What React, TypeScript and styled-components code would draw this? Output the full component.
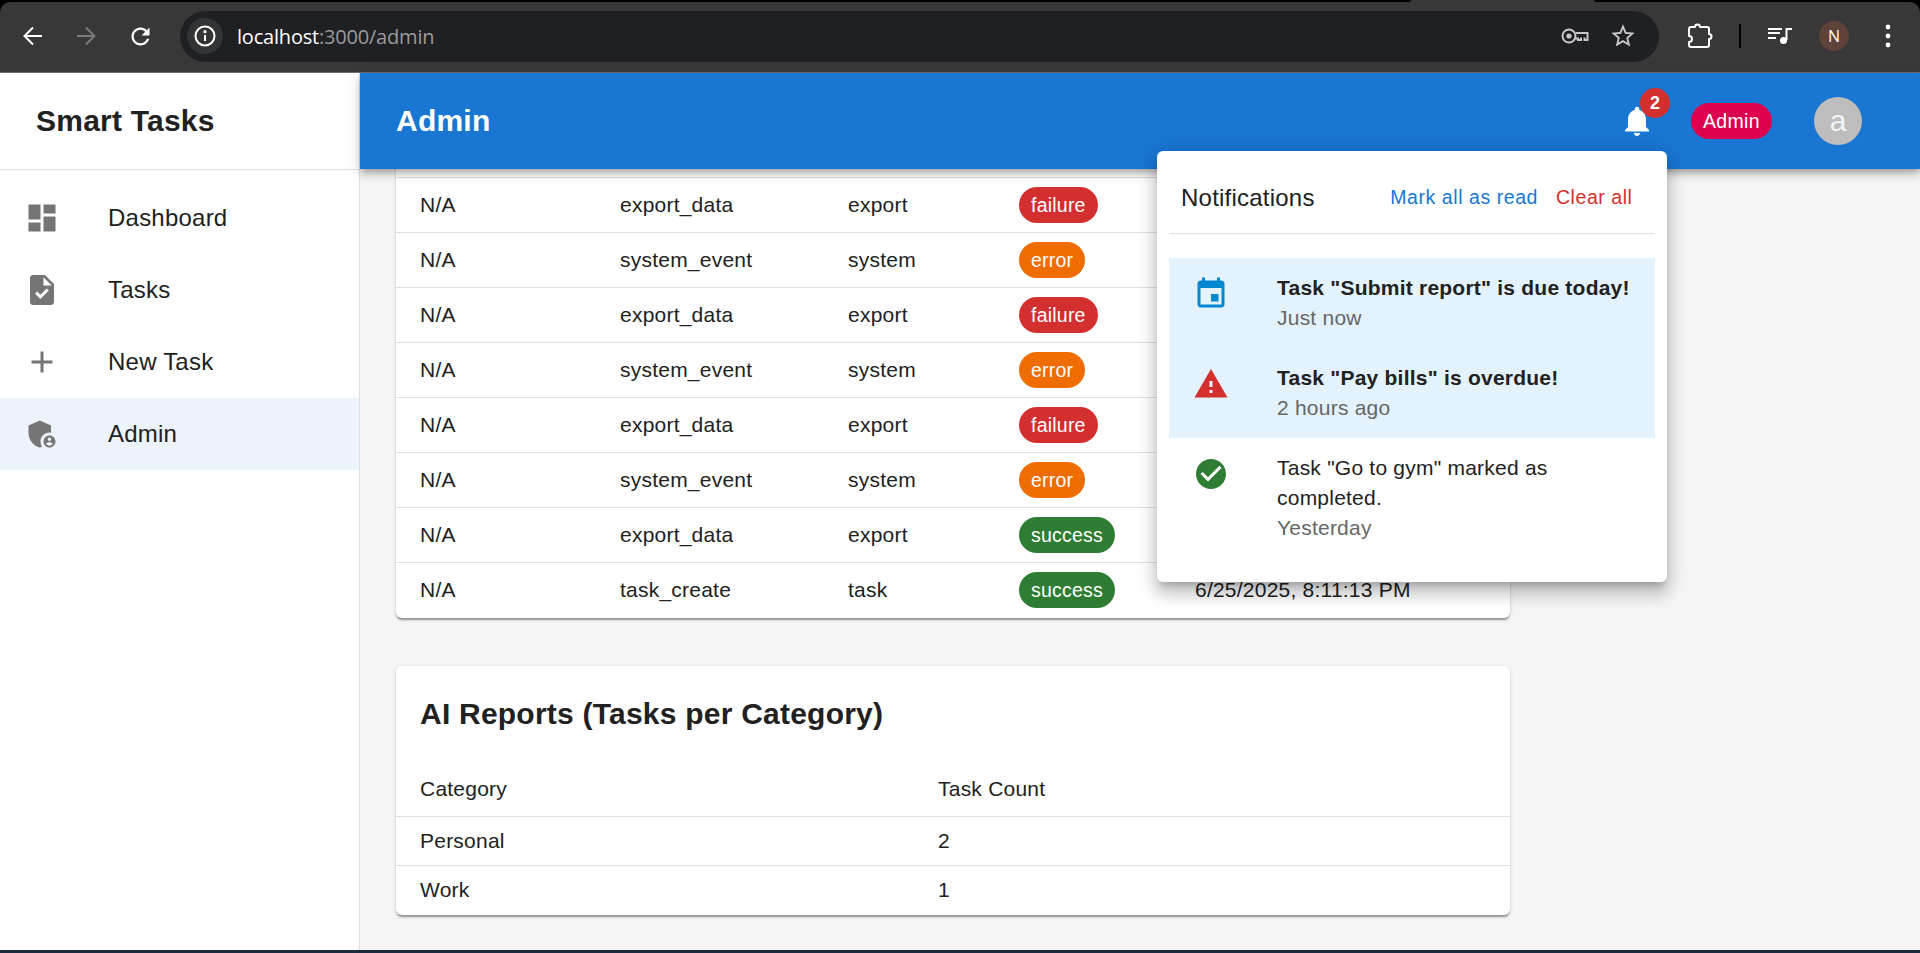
import React from 'react'
import styled, { createGlobalStyle } from 'styled-components'

const GlobalStyle = createGlobalStyle`
  html, body {
    margin: 0;
    padding: 0;
    height: 100%;
    overflow: hidden;
    background: #000;
  }
  #root {
    height: 100%;
  }
  * {
    box-sizing: border-box;
  }
`

const Page = styled.div`
  display: flex;
  flex-direction: column;
  height: 100vh;
  overflow: hidden;
  font-family: 'Liberation Sans', Arial, sans-serif;
  color: #212121;
  background: #f5f5f5;
`

// browser window chrome
const BrowserFrame = styled.div`
  position: relative;
  flex: none;
  height: 73px;
  padding-top: 2px;
  background: #000;
  &::after {
    content: '';
    position: absolute;
    top: 0;
    left: 1410px;
    width: 185px;
    height: 2px;
    background: #383838;
    border-radius: 2px 2px 0 0;
  }
`

const Toolbar = styled.div`
  display: flex;
  align-items: center;
  height: 71px;
  padding: 0 18px 2px 21px;
  background: #383838;
  border-radius: 10px 10px 0 0;
  border-bottom: 1px solid #6e6e6e;
`

const NavButtons = styled.div`
  display: flex;
  align-items: center;
  gap: 29px;
  margin-right: 26px;
  color: #fff;
`

const AddressBar = styled.div`
  flex: 1;
  display: flex;
  align-items: center;
  height: 51px;
  padding: 0 22px 0 7px;
  border-radius: 26px;
  background: #1f2023;
`

const InfoChip = styled.div`
  display: flex;
  align-items: center;
  justify-content: center;
  width: 36px;
  height: 36px;
  border-radius: 50%;
  background: #333436;
  color: #fff;
`

const Url = styled.div`
  margin-left: 14px;
  font-family: 'Open Sans', 'Noto Sans', sans-serif;
  font-size: 20px;
  letter-spacing: -0.2px;
  color: #fff;
  span {
    color: #9b9b9b;
  }
`

const AddressActions = styled.div`
  display: flex;
  align-items: center;
  gap: 20px;
  margin-left: auto;
  color: #c7c7c7;
`

const ToolbarActions = styled.div`
  display: flex;
  align-items: center;
  gap: 25px;
  margin-left: 27px;
  color: #fff;
`

const ToolbarSeparator = styled.div`
  width: 2px;
  height: 24px;
  background: #000;
`

const ProfileBubble = styled.div`
  display: flex;
  align-items: center;
  justify-content: center;
  width: 30px;
  height: 30px;
  border-radius: 50%;
  background: #5f4339;
  color: #fff;
  font-family: 'Open Sans', sans-serif;
  font-size: 16px;
`

// app
const Shell = styled.div`
  flex: 1;
  display: flex;
  min-height: 0;
`

const Sidebar = styled.aside`
  flex: none;
  width: 360px;
  background: #fff;
  border-right: 1px solid #e0e0e0;
`

const Brand = styled.div`
  display: flex;
  align-items: center;
  height: 97px;
  padding-left: 36px;
  font-size: 30px;
  font-weight: 700;
  letter-spacing: 0.225px;
  border-bottom: 1px solid #e0e0e0;
`

const Nav = styled.nav`
  padding-top: 12px;
`

const NavItem = styled.a<{ $active?: boolean }>`
  display: flex;
  align-items: center;
  height: 72px;
  padding-left: 24px;
  font-size: 24px;
  letter-spacing: 0.225px;
  color: #212121;
  background: ${(p) => (p.$active ? '#edf3fb' : 'transparent')};
  svg {
    flex: none;
    margin-right: 48px;
    color: #757575;
  }
`

const Column = styled.div`
  flex: 1;
  min-width: 0;
  display: flex;
  flex-direction: column;
`

const Header = styled.header`
  flex: none;
  position: relative;
  z-index: 2;
  display: flex;
  align-items: center;
  justify-content: space-between;
  height: 96px;
  padding: 0 58px 0 36px;
  background: #1976d2;
  color: #fff;
  box-shadow: 0 3px 6px -1.5px rgba(0, 0, 0, 0.2), 0 6px 7.5px 0 rgba(0, 0, 0, 0.14),
    0 1.5px 15px 0 rgba(0, 0, 0, 0.12);
`

const HeaderTitle = styled.div`
  font-size: 30px;
  font-weight: 700;
  letter-spacing: 0.225px;
`

const HeaderRight = styled.div`
  display: flex;
  align-items: center;
`

const BellWrap = styled.div`
  position: relative;
  display: flex;
  margin-right: 36px;
`

const Badge = styled.span`
  position: absolute;
  top: -15px;
  right: -15px;
  display: flex;
  align-items: center;
  justify-content: center;
  width: 30px;
  height: 30px;
  border-radius: 50%;
  background: #d32f2f;
  font-size: 18px;
  font-weight: 700;
`

const Chip = styled.span<{ $bg: string }>`
  display: inline-flex;
  align-items: center;
  height: 36px;
  padding: 0 12px;
  border-radius: 24px;
  font-size: 19.5px;
  color: #fff;
  background: ${(p) => p.$bg};
`

const RoleChip = styled(Chip)`
  letter-spacing: 0.35px;
`

const Avatar = styled.div`
  display: flex;
  align-items: center;
  justify-content: center;
  width: 48px;
  height: 48px;
  margin-left: 42px;
  border-radius: 50%;
  background: #bdbdbd;
  color: #f5f5f5;
  font-size: 30px;
`

const Main = styled.main`
  flex: 1;
  min-height: 0;
  overflow: hidden;
  display: flex;
  flex-direction: column;
  justify-content: flex-end;
  gap: 48px;
  padding: 0 410px 35px 36px;
`

const Card = styled.section`
  flex: none;
  background: #fff;
  border-radius: 6px;
  box-shadow: 0 3px 1.5px -1.5px rgba(0, 0, 0, 0.2), 0 1.5px 1.5px 0 rgba(0, 0, 0, 0.14),
    0 1.5px 4.5px 0 rgba(0, 0, 0, 0.12);
`

const CardTitle = styled.h2`
  margin: 0;
  padding: 24px;
  font-size: 30px;
  line-height: 48px;
  font-weight: 700;
  letter-spacing: 0.225px;
`

const Table = styled.table`
  width: 100%;
  table-layout: fixed;
  border-collapse: separate;
  border-spacing: 0;
  font-size: 21px;
  letter-spacing: 0.225px;
`

const Cell = styled.td`
  padding: 0 0 0 24px;
  border-bottom: 1px solid #e0e0e0;
  tbody tr:last-child > & {
    padding-bottom: 1px;
    border-bottom: 0;
  }
`

const HeadCell = styled.th`
  padding: 0 0 0 24px;
  font-weight: 400;
  text-align: left;
  border-bottom: 1px solid #e0e0e0;
`

const LogRow = styled.tr`
  height: 55px;
`

const ReportHeadRow = styled.tr`
  height: 55px;
`

const ReportRow = styled.tr`
  height: 49px;
`

// notifications menu
const Popover = styled.div`
  position: absolute;
  top: 78px;
  right: 253px;
  width: 510px;
  padding: 12px;
  border-radius: 6px;
  background: #fff;
  color: #212121;
  box-shadow: 0 7.5px 7.5px -4.5px rgba(0, 0, 0, 0.2), 0 12px 15px 1.5px rgba(0, 0, 0, 0.14),
    0 4.5px 21px 3px rgba(0, 0, 0, 0.12);
`

const PopoverHead = styled.div`
  display: flex;
  align-items: center;
  justify-content: space-between;
  height: 71px;
  padding: 0 15px 1px 12px;
  border-bottom: 1px solid #e0e0e0;
`

const PopoverTitle = styled.div`
  font-size: 24px;
  letter-spacing: 0.225px;
`

const PopoverActions = styled.div`
  display: flex;
  gap: 3px;
`

const TextButton = styled.button<{ $color: string }>`
  padding: 6px 7.5px;
  border: 0;
  background: none;
  font-family: inherit;
  font-size: 19.5px;
  letter-spacing: 0.557px;
  color: ${(p) => p.$color};
`

const NoticeList = styled.ul`
  margin: 24px 0 0;
  padding: 0 0 12px;
  list-style: none;
`

const Notice = styled.li<{ $unread?: boolean }>`
  display: flex;
  align-items: flex-start;
  padding: 15px 24px;
  background: ${(p) => (p.$unread ? '#e3f2fd' : 'transparent')};
  svg {
    flex: none;
    margin: 3px 48px 0 0;
  }
`

const NoticeText = styled.div<{ $unread?: boolean }>`
  font-size: 21px;
  line-height: 30px;
  letter-spacing: 0.225px;
  font-weight: ${(p) => (p.$unread ? 700 : 400)};
`

const NoticeTime = styled.div`
  font-size: 21px;
  line-height: 30px;
  letter-spacing: 0.225px;
  color: #666;
`

const ScreenEdge = styled.div`
  flex: none;
  height: 3px;
  background: #1b2a41;
`

const Icon: React.FC<{ d: string; size?: number; color?: string }> = ({ d, size = 36, color }) => (
  <svg width={size} height={size} viewBox="0 0 24 24" fill={color ?? 'currentColor'}>
    <path d={d} />
  </svg>
)

const Arrow: React.FC<{ flip?: boolean; color: string }> = ({ flip, color }) => (
  <svg width="24" height="24" viewBox="0 0 24 24" fill="none" stroke={color} strokeWidth="2">
    <path d={flip ? 'M3 12h17M12 3.5l8.5 8.5-8.5 8.5' : 'M21 12H4M12 3.5L3.5 12l8.5 8.5'} />
  </svg>
)

const InfoGlyph = () => (
  <svg width="24" height="24" viewBox="0 0 24 24" fill="none" stroke="currentColor" strokeWidth="2">
    <circle cx="12" cy="12" r="9.5" />
    <path d="M12 11v6" />
    <circle cx="12" cy="7.7" r="0.6" fill="currentColor" />
  </svg>
)

const KeyGlyph = () => (
  <svg width="28" height="18" viewBox="0 0 28 18" fill="none" stroke="currentColor" strokeWidth="2">
    <circle cx="8" cy="9" r="6.5" />
    <circle cx="8" cy="9" r="1.6" fill="currentColor" />
    <path d="M14.5 6H26.5V13H23.5V10.5M20 10.5V13H17V11.5H14.5" />
  </svg>
)

const ExtensionGlyph = () => (
  <svg width="28" height="28" viewBox="0 0 28 28" fill="none" stroke="currentColor" strokeWidth="2" strokeLinejoin="round">
    <path d="M3 7a2 2 0 0 1 2-2h4a2.5 2.5 0 0 1 5 0h7a2 2 0 0 1 2 2v5a2.5 2.5 0 0 1 0 5v6a2 2 0 0 1-2 2H5a2 2 0 0 1-2-2v-3a3 3 0 0 0 0-6z" />
  </svg>
)

const QueueGlyph = () => (
  <svg width="28" height="28" viewBox="0 0 28 28" fill="none" stroke="currentColor" strokeWidth="2">
    <path d="M2 7h14M2 11h12M2 16h8M20.5 18V7H26" />
    <circle cx="17.5" cy="18.5" r="3.5" fill="currentColor" stroke="none" />
  </svg>
)

const DotsGlyph = () => (
  <svg width="28" height="28" viewBox="0 0 28 28" fill="currentColor">
    <circle cx="14" cy="5" r="2.4" />
    <circle cx="14" cy="14" r="2.4" />
    <circle cx="14" cy="23" r="2.4" />
  </svg>
)

const paths = {
  dashboard: 'M3 13h8V3H3v10zm0 8h8v-6H3v6zm10 0h8V11h-8v10zm0-18v6h8V3h-8z',
  task: 'M14 2H6c-1.1 0-1.99.9-1.99 2L4 20c0 1.1.89 2 1.99 2H18c1.1 0 2-.9 2-2V8l-6-6zm-3.06 16L7.4 14.46l1.41-1.41 2.12 2.12 4.24-4.24 1.41 1.41L10.94 18zM13 9V3.5L18.5 9H13z',
  add: 'M19 13h-6v6h-2v-6H5v-2h6V5h2v6h6v2z',
  admin:
    'M17 11c.34 0 .67.04 1 .09V6.27L10.5 3 3 6.27v4.91c0 4.54 3.2 8.79 7.5 9.82.55-.13 1.08-.32 1.6-.55-.69-.98-1.1-2.17-1.1-3.45 0-3.31 2.69-6 6-6zM17 13c-2.21 0-4 1.79-4 4s1.79 4 4 4 4-1.79 4-4-1.79-4-4-4zm0 1.38c.62 0 1.12.51 1.12 1.12s-.51 1.12-1.12 1.12-1.12-.51-1.12-1.12.5-1.12 1.12-1.12zm0 5.37c-.93 0-1.74-.46-2.24-1.17.05-.72 1.51-1.08 2.24-1.08s2.19.36 2.24 1.08c-.5.71-1.31 1.17-2.24 1.17z',
  bell: 'M12 22c1.1 0 2-.9 2-2h-4c0 1.1.89 2 2 2zm6-6v-5c0-3.07-1.64-5.64-4.5-6.32V4c0-.83-.67-1.5-1.5-1.5s-1.5.67-1.5 1.5v.68C7.63 5.36 6 7.92 6 11v5l-2 2v1h16v-1l-2-2z',
  event:
    'M17 12h-5v5h5v-5zM16 1v2H8V1H6v2H5c-1.11 0-1.99.9-1.99 2L3 19c0 1.1.89 2 2 2h14c1.1 0 2-.9 2-2V5c0-1.1-.9-2-2-2h-1V1h-2zm3 18H5V8h14v11z',
  warning: 'M1 21h22L12 2 1 21zm12-3h-2v-2h2v2zm0-4h-2v-4h2v4z',
  check:
    'M12 2C6.48 2 2 6.48 2 12s4.48 10 10 10 10-4.48 10-10S17.52 2 12 2zm-2 15l-5-5 1.41-1.41L10 14.17l7.59-7.59L19 8l-9 9z',
  reload:
    'M17.65 6.35C16.2 4.9 14.21 4 12 4c-4.42 0-7.99 3.58-7.99 8s3.57 8 7.99 8c3.73 0 6.84-2.55 7.73-6h-2.08c-.82 2.33-3.04 4-5.65 4-3.31 0-6-2.69-6-6s2.69-6 6-6c1.66 0 3.14.69 4.22 1.78L13 11h7V4l-2.35 2.35z',
  star: 'M22 9.24l-7.19-.62L12 2 9.19 8.63 2 9.24l5.46 4.73L5.82 21 12 17.27 18.18 21l-1.63-7.03L22 9.24zM12 15.4l-3.76 2.27 1-4.28-3.32-2.88 4.38-.38L12 6.1l1.71 4.04 4.38.38-3.32 2.88 1 4.28L12 15.4z',
}

const statusColor: Record<string, string> = {
  failure: '#d32f2f',
  error: '#ef6c00',
  success: '#2e7d32',
}

const logs = [
  { action: 'export_data', target: 'export', status: 'failure' },
  { action: 'system_event', target: 'system', status: 'error' },
  { action: 'export_data', target: 'export', status: 'failure' },
  { action: 'system_event', target: 'system', status: 'error' },
  { action: 'export_data', target: 'export', status: 'failure' },
  { action: 'system_event', target: 'system', status: 'error' },
  { action: 'export_data', target: 'export', status: 'success' },
  { action: 'task_create', target: 'task', status: 'success' },
]

const navItems = [
  { label: 'Dashboard', icon: paths.dashboard },
  { label: 'Tasks', icon: paths.task },
  { label: 'New Task', icon: paths.add },
  { label: 'Admin', icon: paths.admin, active: true },
]

export default function App() {
  return (
    <Page>
      <GlobalStyle />
      <BrowserFrame>
        <Toolbar>
          <NavButtons>
            <Arrow color="#fff" />
            <Arrow flip color="#7c7c7c" />
            <Icon d={paths.reload} size={27} />
          </NavButtons>
          <AddressBar>
            <InfoChip>
              <InfoGlyph />
            </InfoChip>
            <Url>
              localhost<span>:3000/admin</span>
            </Url>
            <AddressActions>
              <KeyGlyph />
              <Icon d={paths.star} size={28} />
            </AddressActions>
          </AddressBar>
          <ToolbarActions>
            <ExtensionGlyph />
            <ToolbarSeparator />
            <QueueGlyph />
            <ProfileBubble>N</ProfileBubble>
            <DotsGlyph />
          </ToolbarActions>
        </Toolbar>
      </BrowserFrame>

      <Shell>
        <Sidebar>
          <Brand>Smart Tasks</Brand>
          <Nav>
            {navItems.map((item) => (
              <NavItem key={item.label} $active={item.active}>
                <Icon d={item.icon} />
                {item.label}
              </NavItem>
            ))}
          </Nav>
        </Sidebar>

        <Column>
          <Header>
            <HeaderTitle>Admin</HeaderTitle>
            <HeaderRight>
              <BellWrap>
                <Icon d={paths.bell} />
                <Badge>2</Badge>
              </BellWrap>
              <RoleChip $bg="#dc004e">Admin</RoleChip>
              <Avatar>a</Avatar>
            </HeaderRight>

            <Popover>
              <PopoverHead>
                <PopoverTitle>Notifications</PopoverTitle>
                <PopoverActions>
                  <TextButton $color="#1976d2">Mark all as read</TextButton>
                  <TextButton $color="#d32f2f">Clear all</TextButton>
                </PopoverActions>
              </PopoverHead>
              <NoticeList>
                <Notice $unread>
                  <Icon d={paths.event} color="#0288d1" />
                  <div>
                    <NoticeText $unread>Task "Submit report" is due today!</NoticeText>
                    <NoticeTime>Just now</NoticeTime>
                  </div>
                </Notice>
                <Notice $unread>
                  <Icon d={paths.warning} color="#d32f2f" />
                  <div>
                    <NoticeText $unread>Task "Pay bills" is overdue!</NoticeText>
                    <NoticeTime>2 hours ago</NoticeTime>
                  </div>
                </Notice>
                <Notice>
                  <Icon d={paths.check} color="#2e7d32" />
                  <div>
                    <NoticeText>Task "Go to gym" marked as completed.</NoticeText>
                    <NoticeTime>Yesterday</NoticeTime>
                  </div>
                </Notice>
              </NoticeList>
            </Popover>
          </Header>

          <Main>
            <Card>
              <Table>
                <colgroup>
                  <col width="200" />
                  <col width="228" />
                  <col width="171" />
                  <col width="176" />
                  <col />
                </colgroup>
                <tbody>
                  {/* scrolled away under the app bar, only its lower edge shows */}
                  <LogRow>
                    <Cell colSpan={5} />
                  </LogRow>
                  {logs.map((log, i) => (
                    <LogRow key={i}>
                      <Cell>N/A</Cell>
                      <Cell>{log.action}</Cell>
                      <Cell>{log.target}</Cell>
                      <Cell>
                        <Chip $bg={statusColor[log.status]}>{log.status}</Chip>
                      </Cell>
                      <Cell>{i === logs.length - 1 ? '6/25/2025, 8:11:13 PM' : ''}</Cell>
                    </LogRow>
                  ))}
                </tbody>
              </Table>
            </Card>

            <Card>
              <CardTitle>AI Reports (Tasks per Category)</CardTitle>
              <Table>
                <colgroup>
                  <col width="518" />
                  <col />
                </colgroup>
                <thead>
                  <ReportHeadRow>
                    <HeadCell>Category</HeadCell>
                    <HeadCell>Task Count</HeadCell>
                  </ReportHeadRow>
                </thead>
                <tbody>
                  <ReportRow>
                    <Cell>Personal</Cell>
                    <Cell>2</Cell>
                  </ReportRow>
                  <ReportRow>
                    <Cell>Work</Cell>
                    <Cell>1</Cell>
                  </ReportRow>
                </tbody>
              </Table>
            </Card>
          </Main>
        </Column>
      </Shell>
      <ScreenEdge />
    </Page>
  )
}
